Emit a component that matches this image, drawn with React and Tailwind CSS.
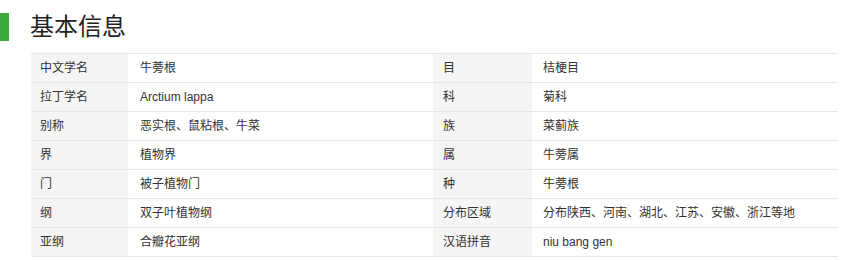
import React from 'react'

const rows = [
  ['中文学名', '牛蒡根', '目', '桔梗目'],
  ['拉丁学名', 'Arctium lappa', '科', '菊科'],
  ['别称', '恶实根、鼠粘根、牛菜', '族', '菜蓟族'],
  ['界', '植物界', '属', '牛蒡属'],
  ['门', '被子植物门', '种', '牛蒡根'],
  ['纲', '双子叶植物纲', '分布区域', '分布陕西、河南、湖北、江苏、安徽、浙江等地'],
  ['亚纲', '合瓣花亚纲', '汉语拼音', 'niu bang gen'],
]

const App = () => {
  return (
    <div className="w-[846px] h-[262px] bg-white text-[#333] font-['Liberation_Sans','Noto_Sans_CJK_SC',sans-serif]">
      <div className="flex items-center pt-[13px]">
        <div className="w-[9px] h-[28px] bg-[#3aab3a]"></div>
        <h2 className="ml-[21px] text-[24px] leading-[28px] text-[#222]">基本信息</h2>
      </div>

      <div className="ml-[31px] mt-[12px] w-[807px] border-t border-[#e6e6e6]">
        {rows.map((r, i) => (
          <div
            key={i}
            className="grid grid-cols-[97px_305px_99px_306px] h-[29px] border-b border-[#e6e6e6] text-[12px] leading-[28px]"
          >
            <div className="bg-[#f5f5f5] pl-[9px]">{r[0]}</div>
            <div className="pl-[12px]">{r[1]}</div>
            <div className="bg-[#f5f5f5] pl-[10px]">{r[2]}</div>
            <div className="pl-[11px]">{r[3]}</div>
          </div>
        ))}
      </div>
    </div>
  )
}

export default App
